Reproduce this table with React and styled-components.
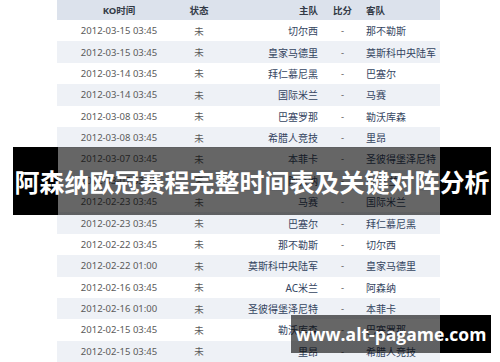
import React from "react";
import styled, { createGlobalStyle } from "styled-components";

const matches = [
  ["2012-03-15 03:45", "切尔西", "那不勒斯"],
  ["2012-03-15 03:45", "皇家马德里", "莫斯科中央陆军"],
  ["2012-03-14 03:45", "拜仁慕尼黑", "巴塞尔"],
  ["2012-03-14 03:45", "国际米兰", "马赛"],
  ["2012-03-08 03:45", "巴塞罗那", "勒沃库森"],
  ["2012-03-08 03:45", "希腊人竞技", "里昂"],
  ["2012-03-07 03:45", "本菲卡", "圣彼得堡泽尼特"],
  ["2012-03-07 03:45", "阿森纳", "AC米兰"],
  ["2012-02-23 03:45", "马赛", "国际米兰"],
  ["2012-02-23 03:45", "巴塞尔", "拜仁慕尼黑"],
  ["2012-02-22 03:45", "那不勒斯", "切尔西"],
  ["2012-02-22 01:00", "莫斯科中央陆军", "皇家马德里"],
  ["2012-02-16 03:45", "AC米兰", "阿森纳"],
  ["2012-02-16 01:00", "圣彼得堡泽尼特", "本菲卡"],
  ["2012-02-15 03:45", "勒沃库森", "巴塞罗那"],
  ["2012-02-15 03:45", "里昂", "希腊人竞技"],
];

const GlobalStyle = createGlobalStyle`
  html, body {
    margin: 0;
    padding: 0;
    background: #ffffff;
  }
  body {
    font-family: "Noto Sans", "Noto Sans CJK SC", sans-serif;
  }
`;

const Page = styled.div`
  position: relative;
  width: 500px;
  height: 362px;
  overflow: hidden;
  padding-left: 57px;
  box-sizing: border-box;
`;

const Table = styled.div`
  width: 383px;
  display: grid;
  grid-template-columns: 124px 36px 109px 33px 81px;
`;

const Row = styled.div`
  display: contents;
  & > div {
    background: ${(p) => (p.$striped ? "#eef1f6" : "#ffffff")};
    height: 21.375px;
  }
`;

const HeadRow = styled.div`
  display: contents;
  & > div {
    background: #dce2ec;
    height: 20px;
    font-weight: bold;
    color: #333a46;
    font-size: 9.5px;
  }
`;

const Cell = styled.div`
  display: flex;
  align-items: center;
  justify-content: ${(p) =>
    p.$align === "right" ? "flex-end" : p.$align === "left" ? "flex-start" : "center"};
  padding: ${(p) =>
    p.$align === "right" ? "0 8px 0 0" : p.$align === "left" ? "0 0 0 7px" : "0"};
  font-size: ${(p) => (p.$team ? "10px" : "9.5px")};
  color: ${(p) => (p.$team ? "#34445f" : "#5a5a5a")};
  white-space: nowrap;
  box-sizing: border-box;
`;

const Banner = styled.div`
  position: absolute;
  left: 13px;
  top: 147px;
  width: 478px;
  height: 68px;
  display: flex;
  align-items: center;
  justify-content: center;
  background: linear-gradient(
    to right,
    #000 0,
    #000 45px,
    rgba(0, 0, 0, 0.6) 45px,
    rgba(0, 0, 0, 0.6) 427px,
    #000 427px
  );
  color: #fff;
  font-family: "Noto Sans CJK SC", sans-serif;
  font-weight: bold;
  font-size: 25px;
  letter-spacing: 0;
  white-space: nowrap;
`;

const Watermark = styled.div`
  position: absolute;
  left: 291px;
  top: 315px;
  width: 200px;
  height: 38px;
  display: flex;
  align-items: center;
  justify-content: center;
  background: linear-gradient(
    to right,
    rgba(0, 0, 0, 0.6) 0,
    rgba(0, 0, 0, 0.6) 149px,
    #000 149px
  );
  color: #fff;
  font-family: "Open Sans", sans-serif;
  font-weight: bold;
  font-size: 17.5px;
  white-space: nowrap;
`;

export default function App() {
  return (
    <Page>
      <GlobalStyle />
      <Table>
        <HeadRow>
          <Cell>KO时间</Cell>
          <Cell>状态</Cell>
          <Cell $align="right">主队</Cell>
          <Cell>比分</Cell>
          <Cell $align="left">客队</Cell>
        </HeadRow>
        {matches.map(([time, home, away], i) => (
          <Row key={i} $striped={i % 2 === 1}>
            <Cell>{time}</Cell>
            <Cell>未</Cell>
            <Cell $align="right" $team>
              {home}
            </Cell>
            <Cell>-</Cell>
            <Cell $align="left" $team>
              {away}
            </Cell>
          </Row>
        ))}
      </Table>
      <Banner>阿森纳欧冠赛程完整时间表及关键对阵分析</Banner>
      <Watermark>www.alt-pagame.com</Watermark>
    </Page>
  );
}
